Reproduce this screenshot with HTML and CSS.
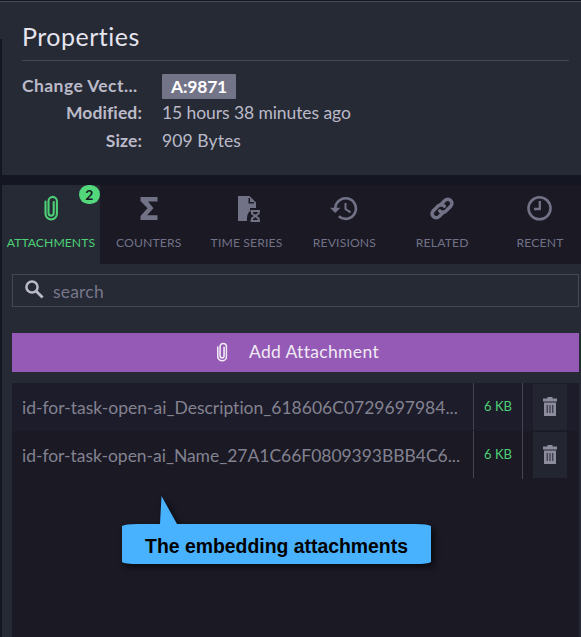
FILE: index.html
```
<!DOCTYPE html>
<html lang="en">
<head>
<meta charset="utf-8">
<title>Properties</title>
<link rel="stylesheet" href="styles.css">
</head>
<body>
<svg class="defs" width="0" height="0">
  <symbol id="clip" viewBox="0 0 14 26"><path d="M9.700 7v11a2.600 2.600 0 0 1-5.200 0V6.100a4.200 4.200 0 0 1 8.400 0v12.600a5.700 5.700 0 0 1-11.400 0V6.500" fill="none" stroke="currentColor" stroke-width="2.100" stroke-linecap="round"/></symbol>
  <symbol id="trash" viewBox="0 0 14 19"><path fill="currentColor" fill-rule="evenodd" d="M4.500 0h5v1.600H14V4.500H0V1.600h4.500zM1 5.500h12V19H1zM3.700 8v8h1V8zm2.800 0v8h1V8zm2.800 0v8h1V8z"/></symbol>
</svg>
<main class="side">
  <section class="props">
    <h1>Properties</h1>
    <dl>
      <dt class="vector">Change Vect...</dt><dd><span class="tag">A:9871</span></dd>
      <dt>Modified:</dt><dd class="modified">15 hours 38 minutes ago</dd>
      <dt>Size:</dt><dd class="size">909 Bytes</dd>
    </dl>
  </section>
  <nav class="tabs">
    <a class="tab active"><svg width="14" height="26"><use href="#clip"/></svg><span>ATTACHMENTS</span><b class="count">2</b></a>
    <a class="tab"><svg width="26" height="26" viewBox="0 0 26 26"><path fill="currentColor" d="M4.500 2h17v4.500H12l5.500 6.700L11 20.300h10.500V25h-17v-4l7-7.800-7-7.200z"/></svg><span>COUNTERS</span></a>
    <a class="tab"><svg width="26" height="27" viewBox="0 0 26 27"><path fill="currentColor" fill-rule="evenodd" d="M4 1h11.500L22 7.500V13h-6v3c-2 2-3 4-3 7v3H4zm10.500 2v5.500H20V7h-4V3z"/><path fill="none" stroke="currentColor" stroke-width="2" d="M16.500 16H26M16.500 26H26M18 16v2.500l3.300 2.500 3.300-2.500V16M18 26v-2.500l3.300-2.500 3.300 2.500V26"/></svg><span class="series">TIME SERIES</span></a>
    <a class="tab"><svg width="28" height="26" viewBox="0 0 28 26"><path d="M5.300 15V13.500a10.300 10.300 0 1 1 3.500 7.800" fill="none" stroke="currentColor" stroke-width="2.600"/><path fill="currentColor" d="M0 12.800h10.500L5.300 18z"/><path d="M15.500 8v6l5 3.300" fill="none" stroke="currentColor" stroke-width="2"/></svg><span>REVISIONS</span></a>
    <a class="tab"><svg width="26" height="26" viewBox="0 0 26 26"><g fill="none" stroke="currentColor" stroke-width="3.500" stroke-linecap="round"><path d="M14.300 17.300l-4.200 4.300a4.100 4.100 0 0 1-5.800-5.800l5-5a4.100 4.100 0 0 1 6 .3"/><path d="M11.700 9.700l4.200-4.300a4.100 4.100 0 0 1 5.800 5.800l-5 5a4.100 4.100 0 0 1-6-.3"/></g></svg><span>RELATED</span></a>
    <a class="tab"><svg width="26" height="26" viewBox="0 0 26 26"><circle cx="12.500" cy="13.300" r="11" fill="none" stroke="currentColor" stroke-width="2.600"/><path d="M12.800 6v8H7" fill="none" stroke="currentColor" stroke-width="2.300"/></svg><span>RECENT</span></a>
  </nav>
  <section class="content">
    <label class="search"><svg width="19" height="19" viewBox="0 0 19 19"><circle cx="7" cy="7" r="5.600" fill="none" stroke="currentColor" stroke-width="2.500"/><path d="M11 11l6.600 6.600" stroke="currentColor" stroke-width="2.800"/></svg><span>search</span></label>
    <button class="add"><svg width="12" height="20" viewBox="0 0 14 26"><use href="#clip"/></svg><span>Add Attachment</span></button>
    <div class="list">
      <div class="row"><span class="name">id-for-task-open-ai_Description_618606C0729697984...</span><span class="kb">6 KB</span><span class="del"><svg width="14" height="19"><use href="#trash"/></svg></span></div>
      <div class="row"><span class="name second">id-for-task-open-ai_Name_27A1C66F0809393BBB4C6...</span><span class="kb">6 KB</span><span class="del"><svg width="14" height="19"><use href="#trash"/></svg></span></div>
    </div>
  </section>
</main>
<div class="callout"><svg width="326" height="84" viewBox="0 0 326 84"><path fill="#48b2ff" d="M0 30Q3 28 16 28H38L39.500 0L55 28H293Q306 28 309 30V66Q306 68 293 68H16Q3 68 0 66z"/></svg><span>The embedding attachments</span></div>
</body>
</html>
```
FILE: styles.css
```
* { box-sizing: border-box; }
body { margin: 0; width: 581px; height: 637px; overflow: hidden; background: #141621; color: #bbbac9; font: 17.5px/28px Lato, sans-serif; font-variant-ligatures: none; position: relative; }
.defs { position: absolute; }
svg { display: block; flex: none; }
.side { height: 637px; padding-top: 1px; display: flex; flex-direction: column; }
.props { height: 174px; border-top: 1px solid #4b4b5d; background: #262a35; padding: 18px 12px 0 22px; position: relative; }
.props::before { content: ""; position: absolute; left: 0; top: 37px; bottom: 0; width: 2px; background: #141621; }
h1 { margin: 0 0 10px; height: 41px; border-bottom: 1px solid #444754; color: #e5e4ee; font-size: 25px; font-weight: 400; line-height: 32px; letter-spacing: .5px; }
dl { margin: 0; display: grid; grid-template-columns: 120px 1fr; column-gap: 20px; grid-auto-rows: 28px; white-space: nowrap; }
dt { text-align: right; font-weight: 700; letter-spacing: .1px; }
.vector { text-align: left; letter-spacing: .42px; line-height: 30px; }
dd { margin: 0; }
.modified { letter-spacing: -.08px; }
.size { letter-spacing: .1px; }
.tag { display: block; width: 74px; height: 25px; margin-top: 3px; background: #747489; color: #fff; border-radius: 1px; font-weight: 700; line-height: 25px; text-align: center; letter-spacing: -.2px; }
.tabs { margin: 10px 0 0 2px; height: 79px; width: 587px; display: grid; grid-template-columns: repeat(6, 1fr); flex: none; }
.tab { position: relative; display: flex; flex-direction: column; align-items: center; background: #1a1924; color: #727287; padding-top: 10px; }
.tab span { margin-top: 11px; font-size: 12.2px; line-height: 22px; letter-spacing: .14px; white-space: nowrap; }
.tab .series { margin-top: 10px; }
.active { background: #262a35; color: #4dcf75; }
.tab.active span { letter-spacing: .05px; }
.count { position: absolute; right: 0; top: 0; width: 21px; height: 19px; border-radius: 10px; background: #53d77b; color: #171923; font-size: 14px; line-height: 19px; text-align: center; }
.content { flex: 1; margin-left: 2px; background: #262a35; padding: 10px 2px 0 10px; display: flex; flex-direction: column; }
.search { height: 33px; border: 1px solid #444754; display: flex; color: #bbbac9; padding: 5px 12px; gap: 9px; }
.search span { color: #77768a; line-height: 23px; letter-spacing: .2px; }
.add { height: 39px; margin: 26px 0 11px; padding: 0 1px 1px 0; border: 0; background: #955ab5; color: #f0eaf5; font: inherit; display: flex; justify-content: center; align-items: center; gap: 21px; }
.add span { letter-spacing: .33px; margin-right: -4px; }
.add svg { margin-left: 1px; }
.list { flex: 1; background: #1a1924; }
.row { display: flex; height: 48px; }
.row:first-child { background: #1d1c2a; }
.name { width: 462px; height: 47px; padding: 11px 0 0 10px; border-right: 1px solid #444452; color: #838290; white-space: nowrap; letter-spacing: 0; }
.name.second { letter-spacing: -.03px; }
.kb { width: 49px; border-right: 1px solid #444452; color: #4dcf75; font-size: 13px; line-height: 47px; text-align: center; }
.del { width: 34px; height: 46px; margin: 1px 0 0 10px; background: #232631; color: #8d8c9c; padding: 13px 0 0 10px; }
.callout { position: absolute; left: 122px; top: 496px; }
.callout svg { filter: drop-shadow(3px 3px 3px #0009); }
.callout span { position: absolute; left: 0; top: 28px; width: 309px; color: #000; font: bold 19.4px/44px "Liberation Sans", sans-serif; text-align: center; white-space: nowrap; }
```
